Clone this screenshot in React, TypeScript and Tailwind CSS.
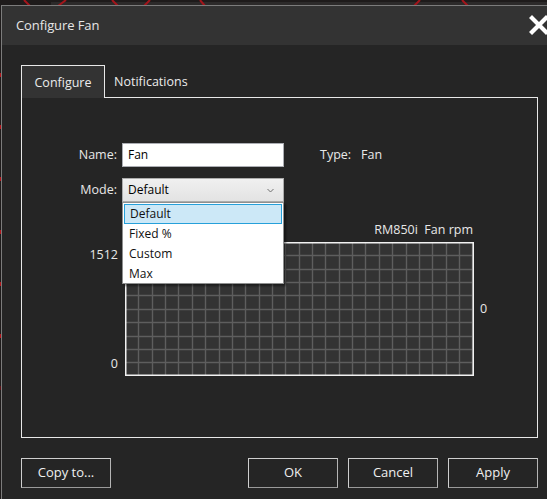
import React from 'react';

const modes = ['Default', 'Fixed %', 'Custom', 'Max'];

const Backdrop: React.FC = () => (
  <svg className="absolute inset-0" width="547" height="499" viewBox="0 0 547 499">
    <rect x="51" y="2" width="496" height="3" fill="#2c2a2a" />
    <g stroke="#a3151b" strokeWidth="2">
      <line x1="24" y1="0" x2="30" y2="6" />
      <line x1="66" y1="0" x2="58" y2="6" />
      <line x1="112" y1="0" x2="118" y2="6" />
      <line x1="150" y1="0" x2="144" y2="6" />
      <line x1="200" y1="0" x2="205" y2="6" />
      <line x1="420" y1="0" x2="414" y2="6" />
      <line x1="462" y1="0" x2="468" y2="6" />
    </g>
    <g fill="#b3141b">
      <rect x="0" y="73" width="1" height="4" />
      <rect x="0" y="125" width="1" height="4" />
      <rect x="0" y="177" width="1" height="4" />
      <rect x="0" y="230" width="1" height="4" />
      <rect x="0" y="282" width="1" height="4" />
      <rect x="0" y="334" width="1" height="4" />
      <rect x="0" y="386" width="1" height="4" fill="#5a1015" />
    </g>
  </svg>
);

const FanGrid: React.FC = () => {
  const w = 349;
  const h = 134;
  const step = 13.36;
  const cols = Array.from({ length: 26 }, (_, i) => Math.round((i + 1) * step) + 0.5);
  const rows = Array.from({ length: 9 }, (_, i) => Math.round((i + 1) * step) + 0.5);
  return (
    <svg width={w} height={h} viewBox={`0 0 ${w} ${h}`} className="block">
      <rect x="0" y="0" width={w} height={h} fill="#333333" />
      <g stroke="#5e5e5e" strokeWidth="1.4">
        {cols.map(x => <line key={`c${x}`} x1={x} y1="0" x2={x} y2={h} />)}
        {rows.map(y => <line key={`r${y}`} x1="0" y1={y} x2={w} y2={y} />)}
      </g>
      <rect x="0.75" y="0.75" width={w - 1.5} height={h - 1.5} fill="none" stroke="#f2f2f2" strokeWidth="1.5" />
    </svg>
  );
};

const DialogButton: React.FC<{ label: string }> = ({ label }) => (
  <button className="w-[90px] h-[30px] border border-[#cfcfcf] border-b-[#9a9a9a] border-r-[#b5b5b5] bg-[#252525] text-[13px] text-[#f0f0f0]">
    {label}
  </button>
);

export default function App() {
  return (
    <div className="relative w-[547px] h-[499px] overflow-hidden bg-[#1e1b1b] font-['Open_Sans',sans-serif]">
      <Backdrop />
      <div className="relative ml-[1px] mt-[5px] w-[548px] h-[494px] border-l border-t border-[#7c7c7c] bg-[#252525] flex flex-col">
        {/* title bar */}
        <div className="h-[39px] bg-[#333333] flex items-center justify-between pl-[14px]">
          <span className="text-[13px] text-[#e6e6e6] tracking-[-0.1px]">Configure Fan</span>
          <svg width="20" height="20" viewBox="0 0 20 20" className="mt-[-1px]">
            <path d="M3 3 L17 17 M17 3 L3 17" stroke="#ffffff" strokeWidth="4.2" strokeLinecap="square" />
          </svg>
        </div>

        <div className="pl-[19px] pt-[20px]">
          {/* tabs */}
          <div className="flex items-end h-[32px]">
            <div className="relative z-10 -mb-px w-[84px] h-[33px] border-t border-l border-r border-[#e8e8e8] bg-[#333333] flex items-center justify-center pt-[2px] text-[12.5px] text-[#ececec]">
              Configure
            </div>
            <div className="ml-[9px] h-[32px] flex items-center pt-[3px] text-[12.5px] text-[#ececec]">Notifications</div>
          </div>

          {/* panel */}
          <div className="w-[517px] h-[341px] border border-[#e8e8e8] pt-[45px] text-[12.5px] text-[#e8e8e8]">
            <div className="flex items-center h-[24px]">
              <span className="w-[100px] pr-[5px] text-right">Name:</span>
              <div className="w-[162px] h-[24px] bg-white border border-[#abadb3] flex items-center pl-[5px] text-[12px] text-black">Fan</div>
              <span className="ml-[36px]">Type:</span>
              <span className="ml-[10px]">Fan</span>
            </div>

            <div className="flex items-center h-[24px] mt-[11px]">
              <span className="w-[100px] pr-[5px] text-right">Mode:</span>
              <div className="relative w-[162px] h-[24px]">
                <div className="w-full h-full bg-gradient-to-b from-[#f0f0f0] to-[#e3e3e3] border border-[#acacac] flex items-center justify-between pl-[5px] pr-[9px] text-[12px] text-black">
                  <span>Default</span>
                  <svg width="7" height="5" viewBox="0 0 7 5">
                    <path d="M0.5 1 L3.5 4 L6.5 1" stroke="#707070" strokeWidth="1" fill="none" />
                  </svg>
                </div>
                {/* open list */}
                <div className="absolute left-0 top-full z-20 w-[162px] h-[82px] bg-white border border-[#8e8f8f] shadow-[2px_2px_2px_rgba(0,0,0,0.45)] pt-px px-px">
                  {modes.map((m, i) => (
                    <div
                      key={m}
                      className={`h-[20px] flex items-center pl-[5px] text-[12px] text-[#111] ${i === 0 ? 'bg-[#cce8f7] border border-[#26a0da]' : ''}`}
                    >
                      {m}
                    </div>
                  ))}
                </div>
              </div>
            </div>

            {/* chart */}
            <div className="flex mt-[19px]">
              <div className="w-[103px] flex flex-col justify-end">
                <div className="h-[134px] flex flex-col justify-between items-end pr-[7px] pt-[4px] pb-[2px]">
                  <span>1512</span>
                  <span>0</span>
                </div>
              </div>
              <div className="flex flex-col">
                <div className="h-[18px] mb-[3px] flex items-center justify-end pr-px">RM850i&nbsp;&nbsp;Fan rpm</div>
                <FanGrid />
              </div>
              <div className="flex flex-col justify-end">
                <div className="h-[134px] flex items-center pl-[6px]">0</div>
              </div>
            </div>
          </div>

          {/* buttons */}
          <div className="w-[517px] mt-[20px] flex justify-between">
            <DialogButton label="Copy to..." />
            <div className="flex gap-[10px]">
              <DialogButton label="OK" />
              <DialogButton label="Cancel" />
              <DialogButton label="Apply" />
            </div>
          </div>
        </div>
      </div>
    </div>
  );
}
